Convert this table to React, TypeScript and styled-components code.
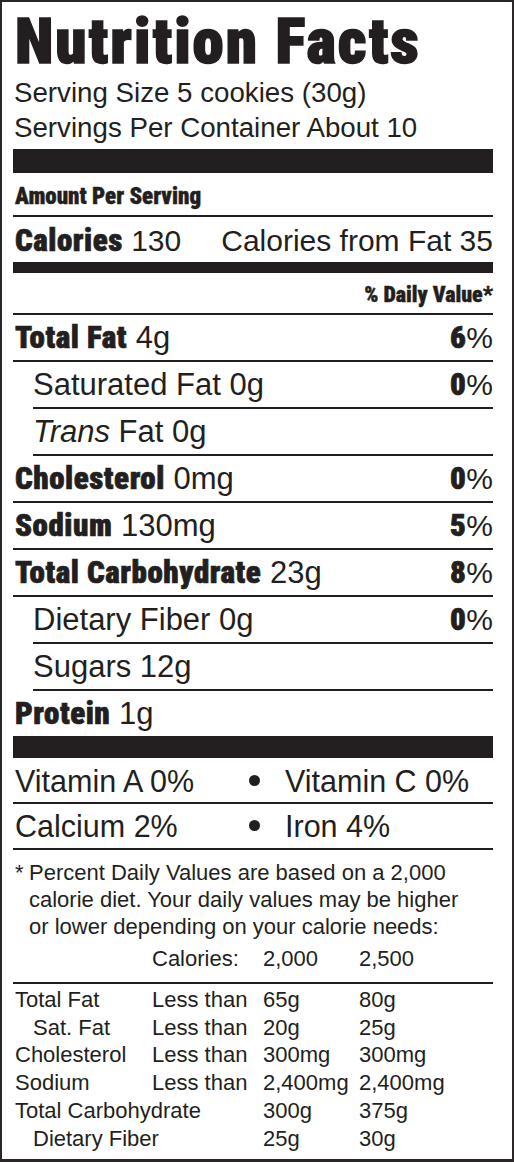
import React from 'react';
import styled, { createGlobalStyle } from 'styled-components';

const INK = '#231f20';
const COND = `"Roboto Condensed", "Open Sans Condensed", Roboto, "Liberation Sans", sans-serif`;

const Global = createGlobalStyle`
  html, body { margin: 0; padding: 0; background: #fff; }
  body {
    font-family: "Liberation Sans", Arial, Helvetica, sans-serif;
    color: ${INK};
  }
`;

const Label = styled.div`
  box-sizing: border-box;
  width: 514px;
  height: 1162px;
  border: 2px solid #2b2728;
  border-bottom-width: 3px;
  padding: 0 19px 0 11px;
  background: #fff;
  display: flex;
  flex-direction: column;
`;

const Title = styled.h1`
  margin: 0;
  padding-top: 7px;
  padding-left: 2px;
  font-family: ${COND};
  font-stretch: 75%;
  font-weight: 900;
  font-size: 63px;
  line-height: 66px;
  letter-spacing: 2px;
  -webkit-text-stroke: 1.5px ${INK};
  white-space: nowrap;
`;

const Serving = styled.div`
  font-size: 27.7px;
  line-height: 35px;
  padding-left: 1px;
`;

const Bar = styled.div<{ $h: number; $mt?: number }>`
  height: ${(p) => p.$h}px;
  margin-top: ${(p) => p.$mt ?? 0}px;
  background: ${INK};
  flex: none;
`;

const Small = styled.div<{ $right?: boolean; $pt: number; $pb: number; $size: number; $rule?: boolean }>`
  font-family: ${COND};
  font-stretch: 75%;
  font-weight: 900;
  font-size: ${(p) => p.$size}px;
  line-height: 28px;
  -webkit-text-stroke: 0.4px ${INK};
  text-align: ${(p) => (p.$right ? 'right' : 'left')};
  padding: ${(p) => p.$pt}px 0 ${(p) => p.$pb}px ${(p) => (p.$right ? 0 : 2)}px;
  border-bottom: ${(p) => (p.$rule ? `2px solid ${INK}` : 'none')};
`;

const Row = styled.div<{ $indent?: boolean; $rule?: boolean; $pt?: number; $pb?: number; $size?: number }>`
  box-sizing: border-box;
  display: flex;
  justify-content: space-between;
  align-items: baseline;
  margin-left: ${(p) => (p.$indent ? '20px' : '0')};
  padding: ${(p) => p.$pt ?? 6}px 0 ${(p) => p.$pb ?? 5}px ${(p) => (p.$indent ? 0 : 2)}px;
  font-size: ${(p) => p.$size ?? 31}px;
  line-height: 34px;
  height: ${(p) => (p.$rule === false ? 45 : 47)}px;
  border-bottom: ${(p) => (p.$rule === false ? 'none' : `2px solid ${INK}`)};
  white-space: nowrap;
`;

const Strong = styled.span`
  font-family: ${COND};
  font-stretch: 75%;
  font-weight: 900;
  font-size: 31px;
  letter-spacing: 0.55px;
  -webkit-text-stroke: 0.7px ${INK};
`;

const Pct = styled.span`
  font-size: 30px;
`;

const VitRow = styled.div<{ $pt: number; $pb: number }>`
  display: grid;
  grid-template-columns: 236px 36px 1fr;
  align-items: center;
  font-size: 30.5px;
  line-height: 34px;
  padding: ${(p) => p.$pt}px 0 ${(p) => p.$pb}px;
  border-bottom: 2px solid ${INK};
  white-space: nowrap;
`;

const VitText = styled.span`
  padding-left: 2px;
`;

const Dot = styled.span`
  display: block;
  width: 11px;
  height: 11px;
  border-radius: 50%;
  background: ${INK};
  margin-top: -2px;
`;

const Footnote = styled.div`
  display: flex;
  font-size: 22px;
  line-height: 27px;
  padding-top: 9px;
  padding-left: 2px;
  white-space: nowrap;
`;

const Star = styled.span`
  width: 14px;
  flex: none;
`;

const DvGrid = styled.div<{ $rule?: boolean; $pt: number; $pb: number }>`
  display: grid;
  grid-template-columns: 137px 111px 96px 1fr;
  font-size: 22px;
  line-height: 27.8px;
  padding: ${(p) => p.$pt}px 0 ${(p) => p.$pb}px;
  border-bottom: ${(p) => (p.$rule ? `2px solid ${INK}` : 'none')};
  white-space: nowrap;
`;

const Cell = styled.span<{ $indent?: boolean }>`
  padding-left: ${(p) => (p.$indent ? '20px' : '2px')};
`;

type Nutrient = {
  name: string;
  bold?: boolean;
  italicPrefix?: string;
  amount: string;
  dv?: string;
  indent?: boolean;
  rule?: boolean;
};

const nutrients: Nutrient[] = [
  { name: 'Total Fat', bold: true, amount: '4g', dv: '6' },
  { name: 'Saturated Fat', amount: '0g', dv: '0', indent: true },
  { name: 'Fat', italicPrefix: 'Trans', amount: '0g', indent: true },
  { name: 'Cholesterol', bold: true, amount: '0mg', dv: '0' },
  { name: 'Sodium', bold: true, amount: '130mg', dv: '5' },
  { name: 'Total Carbohydrate', bold: true, amount: '23g', dv: '8' },
  { name: 'Dietary Fiber', amount: '0g', dv: '0', indent: true },
  { name: 'Sugars', amount: '12g', indent: true },
  { name: 'Protein', bold: true, amount: '1g', rule: false },
];

const dvRows: { name: string; indent?: boolean; limit: string; a: string; b: string }[] = [
  { name: 'Total Fat', limit: 'Less than', a: '65g', b: '80g' },
  { name: 'Sat. Fat', indent: true, limit: 'Less than', a: '20g', b: '25g' },
  { name: 'Cholesterol', limit: 'Less than', a: '300mg', b: '300mg' },
  { name: 'Sodium', limit: 'Less than', a: '2,400mg', b: '2,400mg' },
  { name: 'Total Carbohydrate', limit: '', a: '300g', b: '375g' },
  { name: 'Dietary Fiber', indent: true, limit: '', a: '25g', b: '30g' },
];

export default function App() {
  return (
    <>
      <Global />
      <Label>
        <Title>Nutrition Facts</Title>
        <Serving>
          Serving Size 5 cookies (30g)
          <br />
          Servings Per Container About 10
        </Serving>
        <Bar $h={24} $mt={4} />
        <Small $size={23} $pt={10} $pb={4} $rule>
          Amount Per Serving
        </Small>
        <Row $pt={7} $pb={4} $rule={false} $size={30}>
          <span>
            <Strong>Calories</Strong> 130
          </span>
          <span>Calories from Fat 35</span>
        </Row>
        <Bar $h={11} />
        <Small $size={22} $pt={8} $pb={4} $right $rule>
          % Daily Value*
        </Small>
        {nutrients.map((n) => (
          <Row key={n.name + n.amount} $indent={n.indent} $rule={n.rule}>
            <span>
              {n.bold ? (
                <Strong>{n.name}</Strong>
              ) : n.italicPrefix ? (
                <>
                  <i>{n.italicPrefix}</i> {n.name}
                </>
              ) : (
                n.name
              )}{' '}
              {n.amount}
            </span>
            {n.dv !== undefined && (
              <Pct>
                <Strong>{n.dv}</Strong>%
              </Pct>
            )}
          </Row>
        ))}
        <Bar $h={22} />
        <VitRow $pt={6} $pb={4}>
          <VitText>Vitamin A 0%</VitText>
          <Dot />
          <span>Vitamin C 0%</span>
        </VitRow>
        <VitRow $pt={5} $pb={5}>
          <VitText>Calcium 2%</VitText>
          <Dot />
          <span>Iron 4%</span>
        </VitRow>
        <Footnote>
          <Star>*</Star>
          <span>
            Percent Daily Values are based on a 2,000
            <br />
            calorie diet. Your daily values may be higher
            <br />
            or lower depending on your calorie needs:
          </span>
        </Footnote>
        <DvGrid $pt={5} $pb={9} $rule>
          <Cell />
          <Cell>Calories:</Cell>
          <Cell>2,000</Cell>
          <Cell>2,500</Cell>
        </DvGrid>
        <DvGrid $pt={2} $pb={0}>
          {dvRows.map((r) => (
            <React.Fragment key={r.name}>
              <Cell $indent={r.indent}>{r.name}</Cell>
              <Cell>{r.limit}</Cell>
              <Cell>{r.a}</Cell>
              <Cell>{r.b}</Cell>
            </React.Fragment>
          ))}
        </DvGrid>
      </Label>
    </>
  );
}
